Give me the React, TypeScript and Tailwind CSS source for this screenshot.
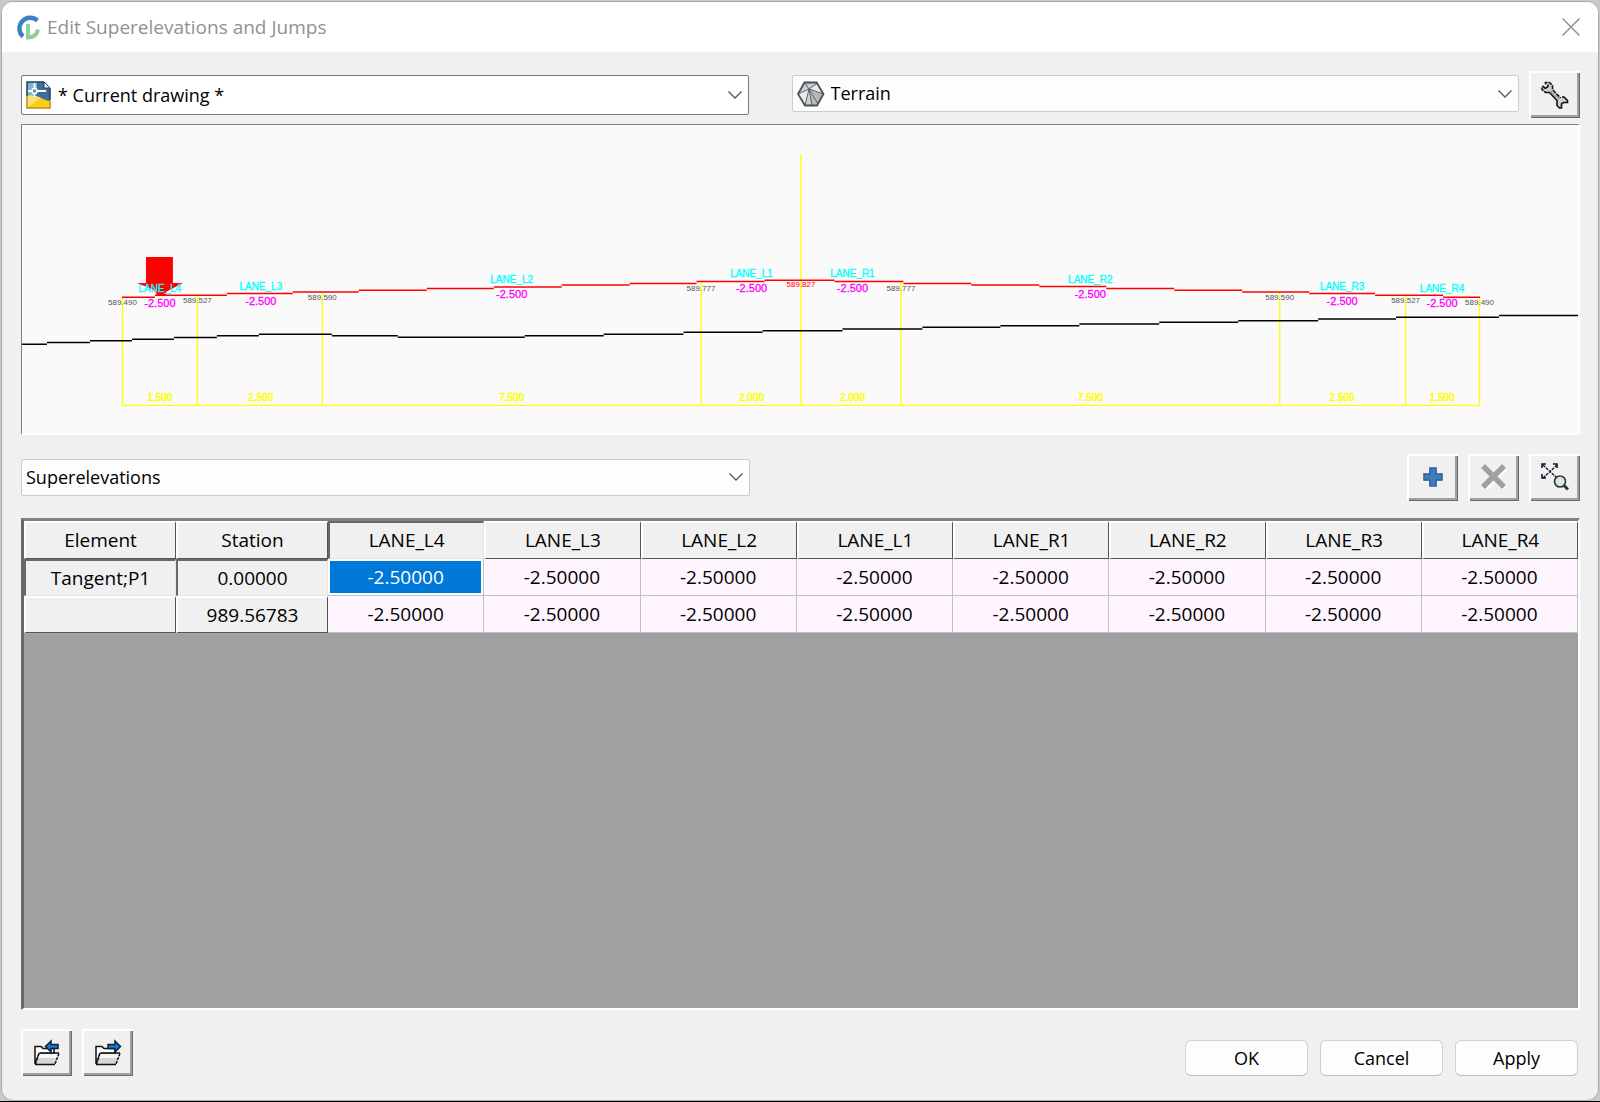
import React from 'react';
import type { ReactNode } from 'react';
import clsx from 'clsx';

const LANES = ['LANE_L4', 'LANE_L3', 'LANE_L2', 'LANE_L1', 'LANE_R1', 'LANE_R2', 'LANE_R3', 'LANE_R4'];

const ROWS = [
  { element: 'Tangent;P1', station: '0.00000' },
  { element: '', station: '989.56783' },
];

// [x1, x2, y] runs of the road surface and of the terrain line
const SURFACE = [
  [122, 155, 297.3], [155, 227, 295.3], [227, 293, 293.6], [293, 359, 292], [359, 427, 290.3],
  [427, 494, 288.7], [494, 562, 287], [562, 630, 285], [630, 697, 283.5], [697, 765, 281.7],
  [765, 835, 280.4], [835, 904, 281.7], [904, 972, 283.5], [972, 1040, 285], [1040, 1107, 286.7],
  [1107, 1175, 288.7], [1175, 1243, 290.3], [1243, 1310, 292], [1310, 1376, 293.6],
  [1376, 1444, 295.3], [1444, 1481, 297.3],
];

const TERRAIN = [
  [22, 47, 344.4], [47, 90, 342.7], [90, 132, 341], [132, 174, 339.4], [174, 217, 337.7],
  [217, 259, 336], [259, 332, 334.4], [332, 398, 336], [398, 525, 337.5], [525, 604, 336],
  [604, 684, 334.4], [684, 763, 332.4], [763, 843, 330.8], [843, 923, 329.2], [923, 1001, 327.5],
  [1001, 1080, 325.8], [1080, 1160, 324.2], [1160, 1239, 322.4], [1239, 1319, 320.8],
  [1319, 1397, 319.2], [1397, 1500, 317.4], [1500, 1579, 315.7],
];

// [x, top, elevation, baseline of the elevation]
const EDGES: [number, number, string, number][] = [
  [122.5, 297, '589.490', 305],
  [197.5, 295, '589.527', 303],
  [322.5, 292, '589.590', 300],
  [701.5, 282, '589.777', 291],
  [801.5, 154, '589.827', 287],
  [901.5, 282, '589.777', 291],
  [1280.5, 292, '589.590', 300],
  [1406.5, 295, '589.527', 303],
  [1480.5, 297, '589.490', 305],
];

// [center, lane, baseline, width]
const SPANS: [number, string, number, string][] = [
  [160, 'LANE_L4', 292, '1.500'],
  [261, 'LANE_L3', 290, '2.500'],
  [512, 'LANE_L2', 283, '7.500'],
  [752, 'LANE_L1', 277, '2.000'],
  [853, 'LANE_R1', 277, '2.000'],
  [1091, 'LANE_R2', 283, '7.500'],
  [1343, 'LANE_R3', 290, '2.500'],
  [1443, 'LANE_R4', 292, '1.500'],
];

const Logo = () => (
  <svg width="26" height="28" viewBox="0 0 26 28" fill="none" aria-hidden="true">
    <path d="M22.500 7.500A10.500 10.500 0 1 0 8 23.500" stroke="#3a80c4" strokeWidth="4.400" />
    <path d="M13 11v13.500c5.500 0 9-3 10-8" stroke="#8fcf9a" strokeWidth="4" />
  </svg>
);

const Chevron = () => (
  <svg
    className="pointer-events-none mr-1.5 -ml-6 shrink-0"
    width="14"
    height="8"
    viewBox="0 0 14 8"
    fill="none"
    stroke="#555"
    strokeWidth="1.300"
    aria-hidden="true"
  >
    <path d="M.5 .5 7 7l6.500-6.500" />
  </svg>
);

const DrawingIcon = () => (
  <svg className="ml-1 shrink-0" width="26" height="28" viewBox="0 0 26 28" aria-hidden="true">
    <path d="M1 1h18l5 6v20H1z" fill="#3d6f99" />
    <path d="M1 1h10v12L1 16z" fill="#7fb4d2" />
    <path d="M1 15c6-1 10 0 14 2 3 1 6 3 9 3v7H1z" fill="#f7cd16" />
    <path d="M1 15c6-1 10 0 14 2L2 26z" fill="#fbe17a" />
    <path d="M1 15v12h23v-7" fill="none" stroke="#c08a1c" strokeWidth="1.500" />
    <path d="M1 15V1h17" fill="none" stroke="#1d3f5e" strokeWidth="1.500" />
    <path d="M18 1v6h6z" fill="#fff" stroke="#1d3f5e" />
    <path d="M24 7v12" stroke="#1d3f5e" strokeWidth="1.500" />
    <path d="M2 10h18M8.500 2v14" stroke="#fff" strokeWidth="1.800" />
    <circle cx="8.500" cy="10" r="2.500" fill="#5c92b8" stroke="#fff" strokeWidth="1.500" />
  </svg>
);

const TerrainIcon = () => (
  <svg className="ml-1 shrink-0" width="28" height="26" viewBox="0 0 28 26" aria-hidden="true">
    <path d="M7.500 1.500h12L26.500 13 20 24.500H8L1 13z" fill="#ccd1d2" />
    <path d="M12 8 8 24.500 1 13z M12 8l14.500 5L21 3z" fill="#e9ebec" />
    <path d="M12 8l3 16.500h5L26.500 13z" fill="#b4babc" />
    <path
      d="M12 8 7.500 1.500M12 8l9-6.500M12 8 1 13M12 8 8 24.500M12 8l3 16.500M12 8l9 15M12 8l14.500 5"
      stroke="#5d6466"
      fill="none"
    />
    <path d="M7.500 1.500h12L26.500 13 20 24.500H8L1 13z" fill="none" stroke="#4a5052" strokeWidth="1.800" />
  </svg>
);

const WrenchIcon = () => (
  <svg width="28" height="28" viewBox="0 0 28 28" aria-hidden="true">
    <path
      d="M4.500 1.500h4l3 3v4l7 7.500h5l3.500 3.500v2h-4.500L20.500 23v4h-2L16 24.500V20L8.500 11.500H5l-4-3V5.500h1.500L4 7l3-2V3.500H4.500z"
      fill="#cfcfcf"
    />
    <path
      d="M7 3.500v2L4 7.500M3.500 10.500l1 1h4l7.500 8v5l2.500 2.500h2v-4l2-1.500h4v-2L23 16h-2"
      fill="none"
      stroke="#111"
      strokeWidth="1.600"
    />
    <path
      d="M4.500 3.500v-2h4l3 3v4l8 8.500M4 7.500 2.500 5.500H1v3l3 2.500"
      fill="none"
      stroke="#111"
      strokeWidth="1.600"
      strokeDasharray="4 1"
    />
    <path d="M10 10l8 8" stroke="#8c8c8c" strokeWidth="1.500" strokeDasharray="2 1" />
  </svg>
);

const PlusIcon = () => (
  <svg width="20" height="20" viewBox="0 0 22 22" aria-hidden="true">
    <path d="M7.500 1h7v6.500H21v7h-6.500V21h-7v-6.500H1v-7h6.500z" fill="#3f7cba" stroke="#2a5d96" strokeWidth="1.400" />
  </svg>
);

const DeleteIcon = () => (
  <svg width="28" height="28" viewBox="0 0 28 28" aria-hidden="true">
    <path d="M5 5l20 20M25 5 5 25" stroke="#fff" strokeWidth="5.500" />
    <path d="M3 3l21 21M24 3 3 24" stroke="#a0a0a0" strokeWidth="5.500" />
  </svg>
);

const ZoomExtentsIcon = () => (
  <svg width="30" height="30" viewBox="0 0 30 30" fill="none" aria-hidden="true">
    <path d="M3 3l14 13M17 3 3 16" stroke="#16162a" strokeWidth="1.400" strokeDasharray="3 1" />
    <path d="M2 6V2h4M13 2h4v4M2 12v4h4" stroke="#16162a" strokeWidth="1.600" />
    <circle cx="20" cy="19.500" r="5.500" fill="#d7e6ea" stroke="#333" strokeWidth="1.600" />
    <path d="M24 23.500l4 4" stroke="#333" strokeWidth="3" />
  </svg>
);

const FolderIcon = ({ out }: { out?: boolean }) => (
  <svg width="28" height="28" viewBox="0 0 28 28" aria-hidden="true">
    <path d="M2 25V7.500h6l2 2h11v5H6L2 25" fill="#fff" stroke="#111" strokeWidth="1.500" />
    <path d="M2.500 25 6 14.500h20L22 25z" fill="#d3d6d3" />
    <path d="M6 15h19l-1.500 4h-19z" fill="#f6f6f6" />
    <path d="M2 25.500h20M6.500 14H26" stroke="#111" strokeWidth="1.500" />
    <path d="M26 14.500 22 25M2.500 25 6 14.500" stroke="#111" strokeWidth="1.500" strokeDasharray="3 1" />
    <path
      d={out ? 'M14 5.500h7V2l5.500 5.500L21 13V9.500h-7z' : 'M25 5.500h-7V2l-5.500 5.500L18 13V9.500h7z'}
      fill="#1976d2"
      stroke="#0b2239"
      strokeWidth="1.500"
    />
  </svg>
);

const ToolButton = ({ label, disabled, children }: { label: string; disabled?: boolean; children: ReactNode }) => (
  <button
    type="button"
    aria-label={label}
    disabled={disabled}
    className="flex h-[47px] w-[51px] shrink-0 items-center justify-center bg-[#f0f0f0] shadow-[inset_2px_2px_#fff,inset_-1px_-1px_#696969,inset_-3px_-3px_#a0a0a0]"
  >
    {children}
  </button>
);

const Combo = ({ label, value, icon, active }: { label: string; value: string; icon?: ReactNode; active?: boolean }) => (
  <div
    className={clsx(
      'flex min-w-0 flex-1 items-center rounded-xs border bg-[#fdfdfd]',
      active ? 'h-10 border-[#7a7a7a] bg-white' : 'h-[37px] border-[#cccccc]'
    )}
  >
    {icon}
    <select
      aria-label={label}
      className={clsx(
        'h-full min-w-0 flex-1 appearance-none bg-transparent text-[18px] text-black outline-none',
        icon ? 'pl-1.5' : 'pl-1'
      )}
    >
      <option>{value}</option>
    </select>
    <Chevron />
  </div>
);

const CrossSection = () => (
  <div className="border-t border-r-2 border-b-2 border-l border-t-[#828282] border-r-white border-b-white border-l-[#828282] bg-[#fafafa]">
    <svg
      className="block h-auto w-full font-['Liberation_Sans',sans-serif]"
      viewBox="22 125 1557 308"
      textAnchor="middle"
      role="img"
      aria-label="Cross section"
    >
      <g stroke="#ffff00" strokeWidth="1.300">
        {EDGES.map(([x, top]) => (
          <line key={x} x1={x} x2={x} y1={top} y2="405" />
        ))}
        <line x1="122" x2="1481" y1="405.500" y2="405.500" />
      </g>
      <g stroke="#000" strokeWidth="1.500">
        {TERRAIN.map(([x1, x2, y]) => (
          <line key={x1} x1={x1} x2={x2} y1={y} y2={y} />
        ))}
      </g>
      <g stroke="#ff0000" strokeWidth="1.500">
        {SURFACE.map(([x1, x2, y]) => (
          <line key={x1} x1={x1} x2={x2} y1={y} y2={y} />
        ))}
      </g>
      <path d="M146 257h27v26h10l-17 9v4h-8l-4-6-17-7h9z" fill="#ff0000" />
      {EDGES.map(([x, , elevation, y]) => (
        <text key={x} x={x} y={y} fontSize="8" fill={x === 801.5 ? '#ff0000' : '#555555'}>
          {elevation}
        </text>
      ))}
      {SPANS.map(([x, lane, y, width]) => (
        <g key={lane}>
          <text x={x} y={y} fontSize="10" fill="#00ffff" stroke="#00ffff" strokeWidth=".3">
            {lane}
          </text>
          <text x={x} y={y + 15} fontSize="11" fill="#ff00ff" stroke="#ff00ff" strokeWidth=".3">
            -2.500
          </text>
          <text x={x} y="401" fontSize="10" fill="#ffff00" stroke="#ffff00" strokeWidth=".5">
            {width}
          </text>
        </g>
      ))}
    </svg>
  </div>
);

const RAISED = 'border-t-2 border-l-2 border-r border-b border-t-white border-l-white border-r-[#555] border-b-[#555]';
const SUNKEN = 'border-t-2 border-l-2 border-r border-b border-t-[#696969] border-l-[#696969] border-r-[#e3e3e3] border-b-[#e3e3e3]';

const LaneTable = () => (
  <div className="flex-1 border-t-[3px] border-r-2 border-b-2 border-l-[3px] border-t-[#828282] border-r-white border-b-white border-l-[#696969] bg-[#a0a0a0]">
    <table className="w-full table-fixed border-separate border-spacing-0 text-center text-[19px] leading-6 text-black">
      <thead>
        <tr className="h-[38px] bg-[#f0f0f0]">
          <th scope="col" className={clsx('w-[152px] font-normal', RAISED)}>Element</th>
          <th scope="col" className={clsx('w-[152px] font-normal', RAISED)}>Station</th>
          {LANES.map((lane, i) => (
            <th key={lane} scope="col" className={clsx('font-normal', i === 0 ? SUNKEN : RAISED)}>
              {lane}
            </th>
          ))}
        </tr>
      </thead>
      <tbody>
        {ROWS.map((row, r) => (
          <tr key={row.station} className="h-[37px]">
            <td className={clsx('bg-[#f0f0f0]', r === 0 ? SUNKEN : RAISED)}>{row.element}</td>
            <td className={clsx('bg-[#f0f0f0]', r === 0 ? SUNKEN : RAISED)}>{row.station}</td>
            {LANES.map((lane, i) => (
              <td
                key={lane}
                className={clsx(
                  'border-r border-b border-[#c0c0c0]',
                  r === 0 && i === 0
                    ? 'bg-[#0078d7] text-white shadow-[inset_2px_2px_#fff,inset_-2px_-2px_#fff]'
                    : 'bg-[#fff5ff]'
                )}
              >
                -2.50000
              </td>
            ))}
          </tr>
        ))}
      </tbody>
    </table>
  </div>
);

const App = () => {
  return (
    <div className="flex min-h-screen flex-col border-b border-black bg-[#c9c9c9] px-px pt-px font-['Open_Sans','Noto_Sans',sans-serif]">
      <main className="flex flex-1 flex-col overflow-hidden rounded-xl border border-[#a9a9a9] bg-[#f0f0f0]">
        <header className="flex h-[50px] items-center bg-white pr-[18px] pl-[13px]">
          <Logo />
          <h1 className="ml-1.5 flex-1 text-[19px] text-[#919191]">Edit Superelevations and Jumps</h1>
          <button type="button" aria-label="Close">
            <svg width="18" height="18" viewBox="0 0 18 18" stroke="#8c8c8c" strokeWidth="1.400">
              <path d="M.5 .5l17 17M17.500 .5l-17 17" />
            </svg>
          </button>
        </header>

        <div className="flex flex-1 flex-col pt-[19px] pr-[18px] pb-6 pl-[19px]">
          <div className="mb-[6px] flex items-start gap-2.5">
            <div className="flex flex-1 items-start gap-[43px] pt-1">
              <Combo label="Drawing" value="* Current drawing *" icon={<DrawingIcon />} active />
              <Combo label="Surface" value="Terrain" icon={<TerrainIcon />} />
            </div>
            <ToolButton label="Settings">
              <WrenchIcon />
            </ToolButton>
          </div>

          <CrossSection />

          <div className="mt-[19px] mb-[17px] flex items-center gap-2.5">
            <div className="flex flex-1 items-center gap-[43px]">
              <Combo label="Table" value="Superelevations" />
              <div className="flex flex-1 justify-end gap-2.5">
                <ToolButton label="Add">
                  <PlusIcon />
                </ToolButton>
                <ToolButton label="Delete" disabled>
                  <DeleteIcon />
                </ToolButton>
              </div>
            </div>
            <ToolButton label="Zoom extents">
              <ZoomExtentsIcon />
            </ToolButton>
          </div>

          <LaneTable />

          <footer className="mt-[19px] flex items-start gap-2.5">
            <ToolButton label="Import">
              <FolderIcon />
            </ToolButton>
            <ToolButton label="Export">
              <FolderIcon out />
            </ToolButton>
            <div className="flex flex-1 justify-end gap-3 pt-[11px] pr-0.5">
              {['OK', 'Cancel', 'Apply'].map((label) => (
                <button
                  key={label}
                  type="button"
                  className="h-9 w-[123px] rounded-md border border-[#d0d0d0] border-b-[#bcbcbc] bg-[#fdfdfd] text-[18px] text-black"
                >
                  {label}
                </button>
              ))}
            </div>
          </footer>
        </div>
      </main>
    </div>
  );
};

export default App;
